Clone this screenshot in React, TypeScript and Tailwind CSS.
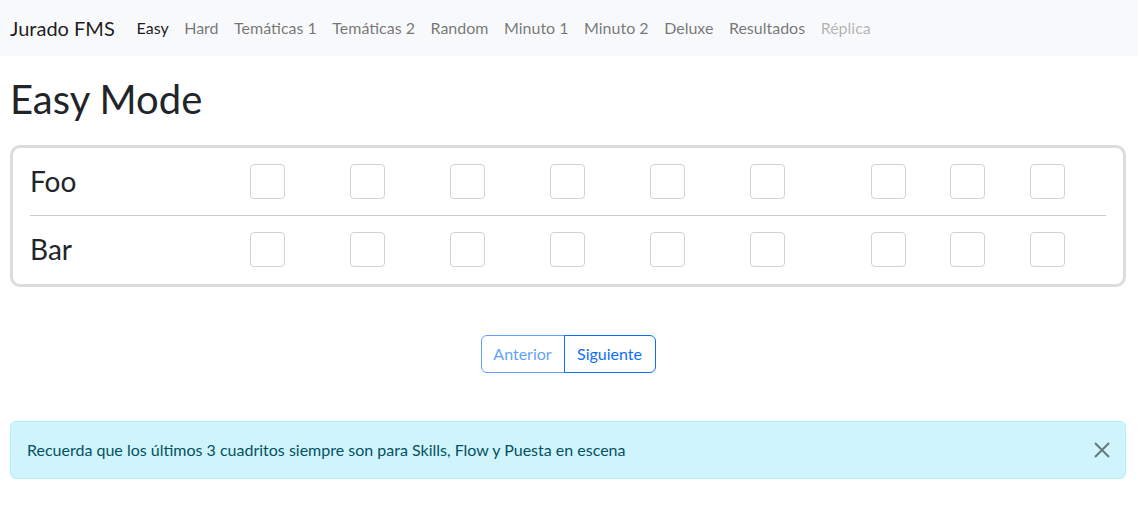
const links = [
  { label: 'Easy', cls: 'text-black/90' },
  { label: 'Hard', cls: 'text-black/55' },
  { label: 'Temáticas 1', cls: 'text-black/55' },
  { label: 'Temáticas 2', cls: 'text-black/55' },
  { label: 'Random', cls: 'text-black/55' },
  { label: 'Minuto 1', cls: 'text-black/55' },
  { label: 'Minuto 2', cls: 'text-black/55' },
  { label: 'Deluxe', cls: 'text-black/55' },
  { label: 'Resultados', cls: 'text-black/55' },
  { label: 'Réplica', cls: 'text-black/30' },
];

function Box() {
  return <div className="w-[35px] h-[35px] rounded-[4px] border border-[#ced4da] bg-white" />;
}

function Row({ name, last }: { name: string; last?: boolean }) {
  return (
    <div
      className={
        'grid grid-cols-[220px_100px_100px_100px_100px_100px_121px_79px_80px_1fr] items-center ' +
        (last ? 'pt-4 pb-[17px]' : 'py-4 border-b border-[#cbcbcb]')
      }
    >
      <div className="text-[28px] leading-[35px] text-[#212529]">{name}</div>
      {Array.from({ length: 9 }).map((_, i) => (
        <Box key={i} />
      ))}
    </div>
  );
}

export default function App() {
  return (
    <div className="min-h-[526px] bg-white text-[#212529]" style={{ fontFamily: 'Lato, "Noto Sans", sans-serif' }}>
      <nav className="h-[56px] bg-[#f8f9fa] flex items-center pl-[10px]">
        <span className="text-[20px] leading-[30px] text-black/90 mr-[14px]">Jurado FMS</span>
        <div className="flex items-center">
          {links.map((l) => (
            <span key={l.label} className={'px-[7.75px] text-[16px] leading-6 ' + l.cls}>
              {l.label}
            </span>
          ))}
        </div>
      </nav>
      <div className="pl-[10px] pr-[12px]">
        <h1 className="pt-[19px] text-[40px] leading-[48px] text-[#212529]">Easy Mode</h1>
        <div className="mt-[22px] border-[3px] border-[#dcdcdc] rounded-[10px] px-[17px]">
          <Row name="Foo" />
          <Row name="Bar" last />
        </div>
        <div className="flex justify-center mt-[48px]">
          <div className="flex">
            <button className="w-[84px] h-[38px] text-[16px] border border-[#0d6efd] rounded-l-[6px] text-[#0d6efd] opacity-65">
              Anterior
            </button>
            <button className="w-[92px] h-[38px] -ml-px text-[16px] border border-[#0d6efd] rounded-r-[6px] text-[#0d6efd]">
              Siguiente
            </button>
          </div>
        </div>
        <div className="mt-[48px] flex items-center justify-between border border-[#b6effb] bg-[#cff4fc] rounded-[6px] p-4 text-[#055160]">
          <span className="text-[16px] leading-6">
            Recuerda que los últimos 3 cuadritos siempre son para Skills, Flow y Puesta en escena
          </span>
          <svg width="16" height="16" viewBox="0 0 16 16" className="mr-[-1px]">
            <path d="M1 1 L15 15 M15 1 L1 15" stroke="#000" strokeOpacity="0.5" strokeWidth="2" fill="none" />
          </svg>
        </div>
      </div>
    </div>
  );
}
